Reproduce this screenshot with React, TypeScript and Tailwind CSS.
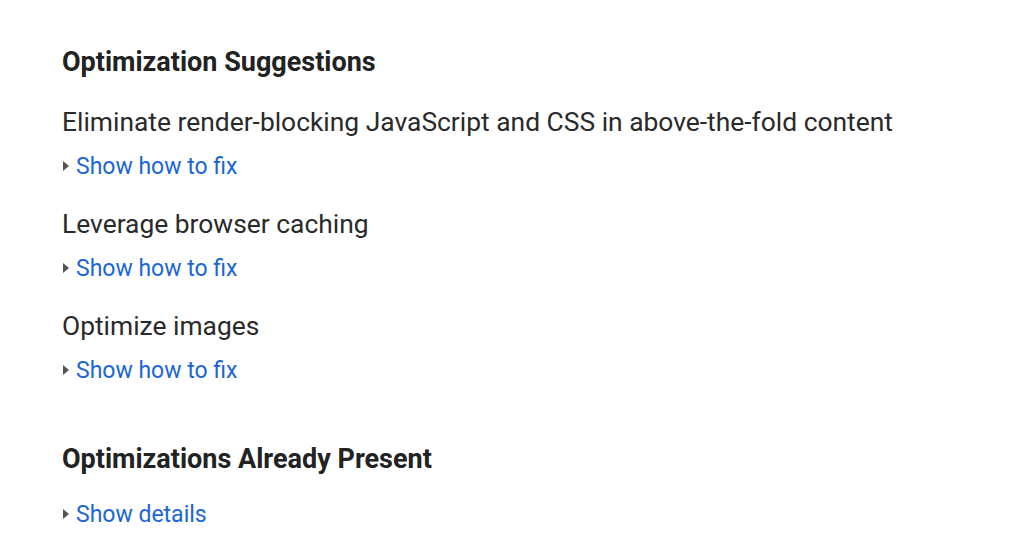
import React from "react";

function Tri() {
  return (
    <svg width="6" height="10" viewBox="0 0 6 10" className="ml-[1px] mr-[7px] shrink-0">
      <polygon points="0,0 6,5 0,10" fill="#555555" />
    </svg>
  );
}

function FixLink({ label }: { label: string }) {
  return (
    <div className="flex items-center h-[30px] text-[23px] text-[#1b66d6] leading-none">
      <Tri />
      <span>{label}</span>
    </div>
  );
}

export default function App() {
  const items = [
    "Eliminate render-blocking JavaScript and CSS in above-the-fold content",
    "Leverage browser caching",
    "Optimize images",
  ];
  return (
    <div
      className="w-[1024px] h-[533px] bg-white pl-[62px] pt-[46px] overflow-hidden"
      style={{ fontFamily: "Roboto, 'Liberation Sans', sans-serif" }}
    >
      <h2 className="text-[27px] font-bold text-[#222222] leading-[32px]">Optimization Suggestions</h2>
      <div className="flex flex-col gap-[28px] mt-[29px]">
        {items.map((t) => (
          <div key={t} className="flex flex-col gap-[14px]">
            <div className="text-[26.4px] text-[#2a2a2a] leading-[30px]">{t}</div>
            <FixLink label="Show how to fix" />
          </div>
        ))}
      </div>
      <h2 className="text-[27px] font-bold text-[#222222] leading-[32px] mt-[58px]">Optimizations Already Present</h2>
      <div className="mt-[24px]">
        <FixLink label="Show details" />
      </div>
    </div>
  );
}
